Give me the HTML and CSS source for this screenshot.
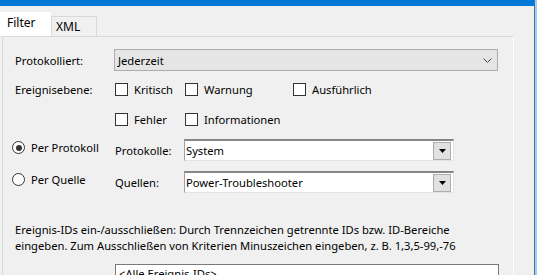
FILE: index.html
```html
<!DOCTYPE html>
<html lang="de">
<head>
  <meta charset="UTF-8">
  <title>Aktuelles Protokoll filtern</title>
  <link rel="stylesheet" href="styles.css">
</head>
<body>

  <div class="window">
    <div class="dialog">
      <div class="titlebar"></div>

      <div class="tabs">
        <div class="tab active">Filter</div>
        <div class="tab">XML</div>
      </div>

      <div class="panel">
        <div class="row logged">
          <span class="label">Protokolliert:</span>
          <div class="select">
            <span>Jederzeit</span>
            <svg class="chevron" width="9" height="5" viewBox="0 0 9 5"><path d="M0.5 0.5 L4.5 4.5 L8.5 0.5" fill="none" stroke="#444" stroke-width="1"/></svg>
          </div>
        </div>

        <div class="levels">
          <span class="label">Ereignisebene:</span>
          <label class="check"><span class="box"></span>Kritisch</label>
          <label class="check"><span class="box"></span>Warnung</label>
          <label class="check"><span class="box"></span>Ausführlich</label>
          <span></span>
          <label class="check"><span class="box"></span>Fehler</label>
          <label class="check wide"><span class="box"></span>Informationen</label>
        </div>

        <div class="row source first">
          <label class="radio"><span class="dot checked"></span>Per Protokoll</label>
          <span class="sublabel">Protokolle:</span>
          <div class="combo">
            <span>System</span>
            <span class="drop"><svg width="7" height="4" viewBox="0 0 7 4"><path d="M0 0 H7 L3.5 4 Z" fill="#000"/></svg></span>
          </div>
        </div>

        <div class="row source">
          <label class="radio"><span class="dot"></span>Per Quelle</label>
          <span class="sublabel">Quellen:</span>
          <div class="combo">
            <span>Power-Troubleshooter</span>
            <span class="drop"><svg width="7" height="4" viewBox="0 0 7 4"><path d="M0 0 H7 L3.5 4 Z" fill="#000"/></svg></span>
          </div>
        </div>

        <p class="hint">Ereignis-IDs ein-/ausschließen: Durch Trennzeichen getrennte IDs bzw. ID-Bereiche<br>eingeben. Zum Ausschließen von Kriterien Minuszeichen eingeben, z. B. 1,3,5-99,-76</p>

        <div class="ids">&lt;Alle Ereignis-IDs&gt;</div>
      </div>
    </div>
    <div class="edge"></div>
  </div>

</body>
</html>
```

FILE: styles.css
```css
body {
  margin: 0;
  background-color: #f0f0f0;
  font-family: "Noto Sans", "Segoe UI", sans-serif;
  font-size: 11.2px;
  color: #000;
  overflow: hidden;
}
.window {
  display: flex;
  height: 275px;
}
.dialog {
  width: 534px;
}
.edge {
  width: 2px;
  border-left: 1px solid #3a78b0;
  background-color: #a9c9e6;
}
.titlebar {
  height: 6px;
  background-color: #0078d7;
}
.tabs {
  display: flex;
  align-items: flex-end;
  margin-top: 7px;
  height: 23px;
  font-size: 12px;
}
.tab {
  height: 19px;
  padding: 0 0 0 4px;
  width: 40px;
  border: 1px solid #d9d9d9;
  border-bottom: none;
  background-color: #f0f0f0;
  line-height: 20px;
}
.tab.active {
  height: 23px;
  width: 43px;
  padding-left: 6px;
  background-color: #fff;
  border-color: #fff;
  line-height: 20px;
  position: relative;
  z-index: 1;
}
.panel {
  margin-left: 2px;
  width: 512px;
  height: 300px;
  border: 1px solid #dadada;
  border-right-color: #fff;
  padding: 12px 0 0 12px;
  box-sizing: border-box;
}
.row {
  display: flex;
  align-items: center;
}
.label {
  width: 99px;
}
.select {
  width: 384px;
  height: 22px;
  box-sizing: border-box;
  border: 1px solid #adadad;
  background-color: #e5e5e5;
  display: flex;
  align-items: center;
  justify-content: space-between;
  padding: 0 5px 0 3px;
}
.chevron {
  margin-top: 1px;
}
.levels {
  display: grid;
  grid-template-columns: 100px 70px 108px auto;
  row-gap: 14px;
  margin-top: 10px;
  align-items: center;
}
.check {
  display: flex;
  align-items: center;
  gap: 6px;
  height: 16px;
  white-space: nowrap;
}
.box {
  width: 11px;
  height: 11px;
  border: 1px solid #333;
  background-color: #fff;
}
.source {
  height: 22px;
}
.source.first {
  margin-top: 12px;
}
.source + .source {
  margin-top: 10px;
}
.radio {
  display: flex;
  align-items: center;
  gap: 6px;
  width: 103px;
  margin-left: -3px;
  margin-top: -5px;
}
.dot {
  width: 11px;
  height: 11px;
  border: 1px solid #333;
  border-radius: 50%;
  background-color: #fff;
  position: relative;
}
.dot.checked::after {
  content: "";
  position: absolute;
  left: 2.5px;
  top: 2.5px;
  width: 6px;
  height: 6px;
  border-radius: 50%;
  background-color: #333;
}
.sublabel {
  width: 69px;
}
.combo {
  width: 270px;
  height: 22px;
  box-sizing: border-box;
  background-color: #fff;
  border-top: 2px solid #858585;
  border-left: 1px solid #a0a0a0;
  border-right: 1px solid #e3e3e3;
  border-bottom: 1px solid #e3e3e3;
  display: flex;
  align-items: center;
  justify-content: space-between;
  padding-left: 1px;
}
.drop {
  width: 16px;
  height: 16px;
  margin-right: 2px;
  border: 1px solid #adadad;
  background-color: #e1e1e1;
  display: flex;
  align-items: center;
  justify-content: center;
}
.hint {
  margin: 29px 0 0 0;
  line-height: 16px;
  white-space: nowrap;
}
.ids {
  margin: 10px 0 0 100px;
  width: 384px;
  height: 22px;
  box-sizing: border-box;
  border: 1px solid #7a7a7a;
  background-color: #fff;
  padding: 1px 3px;
}
```
